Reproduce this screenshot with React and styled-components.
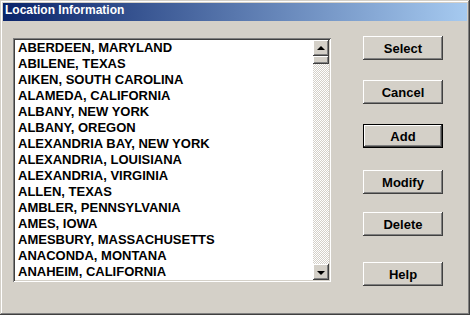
import React from 'react';
import styled, { createGlobalStyle } from 'styled-components';

const GlobalStyle = createGlobalStyle`
  html, body {
    margin: 0;
    padding: 0;
    background: #d4d0c8;
  }
  * {
    box-sizing: border-box;
  }
`;

const places = [
  'ABERDEEN, MARYLAND',
  'ABILENE, TEXAS',
  'AIKEN, SOUTH CAROLINA',
  'ALAMEDA, CALIFORNIA',
  'ALBANY, NEW YORK',
  'ALBANY, OREGON',
  'ALEXANDRIA BAY, NEW YORK',
  'ALEXANDRIA, LOUISIANA',
  'ALEXANDRIA, VIRGINIA',
  'ALLEN, TEXAS',
  'AMBLER, PENNSYLVANIA',
  'AMES, IOWA',
  'AMESBURY, MASSACHUSETTS',
  'ANACONDA, MONTANA',
  'ANAHEIM, CALIFORNIA',
];

const buttons = [
  { label: 'Select', top: -2 },
  { label: 'Cancel', top: 20 },
  { label: 'Add', top: 20, isDefault: true },
  { label: 'Modify', top: 22 },
  { label: 'Delete', top: 18 },
  { label: 'Help', top: 26 },
];

const App = () => (
  <>
    <GlobalStyle />
    <Window>
      <TitleBar>Location Information</TitleBar>
      <Body>
        <ListBox>
          <Items>
            {places.map((p) => (
              <Item key={p}>{p}</Item>
            ))}
          </Items>
          <ScrollBar>
            <ArrowButton>
              <Arrow up />
            </ArrowButton>
            <Thumb />
            <Track />
            <ArrowButton>
              <Arrow />
            </ArrowButton>
          </ScrollBar>
        </ListBox>
        <ButtonColumn>
          {buttons.map((b) => (
            <Button key={b.label} top={b.top} isDefault={b.isDefault}>
              {b.label}
            </Button>
          ))}
        </ButtonColumn>
      </Body>
    </Window>
  </>
);

export default App;

const raised = `
  box-shadow:
    inset -1px -1px #404040,
    inset 1px 1px #ffffff,
    inset -2px -2px #808080,
    inset 2px 2px #d4d0c8;
`;

const Window = styled.div`
  width: 470px;
  height: 315px;
  padding: 3px;
  background: #d4d0c8;
  box-shadow:
    inset -1px -1px #404040,
    inset 1px 1px #d4d0c8,
    inset -2px -2px #808080,
    inset 2px 2px #ffffff;
  display: flex;
  flex-direction: column;
`;

const TitleBar = styled.div`
  height: 18px;
  line-height: 18px;
  padding-left: 2px;
  background: linear-gradient(to right, #0a246a, #a6caf0);
  color: #ffffff;
  font: bold 12px 'Liberation Sans', Arial, sans-serif;
  white-space: nowrap;
`;

const Body = styled.div`
  flex: 1;
  display: flex;
  align-items: flex-start;
  padding: 17px 0 0 10px;
`;

const ListBox = styled.div`
  width: 318px;
  height: 244px;
  padding: 2px;
  display: flex;
  background: #ffffff;
  box-shadow:
    inset 1px 1px #808080,
    inset -1px -1px #ffffff,
    inset 2px 2px #404040,
    inset -2px -2px #d4d0c8;
`;

const Items = styled.div`
  flex: 1;
  overflow: hidden;
  padding-left: 3px;
`;

const Item = styled.div`
  height: 16px;
  line-height: 16px;
  font: bold 13px 'Liberation Sans', Arial, sans-serif;
  color: #000000;
  white-space: nowrap;
`;

const ScrollBar = styled.div`
  width: 16px;
  display: flex;
  flex-direction: column;
`;

const ArrowButton = styled.div`
  width: 16px;
  height: 16px;
  background: #d4d0c8;
  ${raised}
  display: flex;
  align-items: center;
  justify-content: center;
`;

const Arrow = styled.div`
  width: 0;
  height: 0;
  border-left: 4px solid transparent;
  border-right: 4px solid transparent;
  ${(p) => (p.up ? 'border-bottom: 4px solid #000;' : 'border-top: 4px solid #000;')}
  margin-top: ${(p) => (p.up ? '-1px' : '1px')};
`;

const Thumb = styled.div`
  width: 16px;
  height: 8px;
  background: #d4d0c8;
  ${raised}
`;

const Track = styled.div`
  flex: 1;
  background-color: #d4d0c8;
  background-image: conic-gradient(#ffffff 25%, #d4d0c8 0 50%, #ffffff 0 75%, #d4d0c8 0);
  background-size: 2px 2px;
`;

const ButtonColumn = styled.div`
  margin-left: 32px;
  display: flex;
  flex-direction: column;
`;

const Button = styled.div`
  width: 80px;
  height: 24px;
  margin-top: ${(p) => p.top}px;
  background: #d4d0c8;
  display: flex;
  align-items: center;
  justify-content: center;
  font: bold 13px 'Liberation Sans', Arial, sans-serif;
  color: #000000;
  ${(p) =>
    p.isDefault
      ? `box-shadow:
          inset 0 0 0 1px #000000,
          inset -2px -2px #404040,
          inset 2px 2px #ffffff,
          inset -3px -3px #808080;`
      : raised}
`;
